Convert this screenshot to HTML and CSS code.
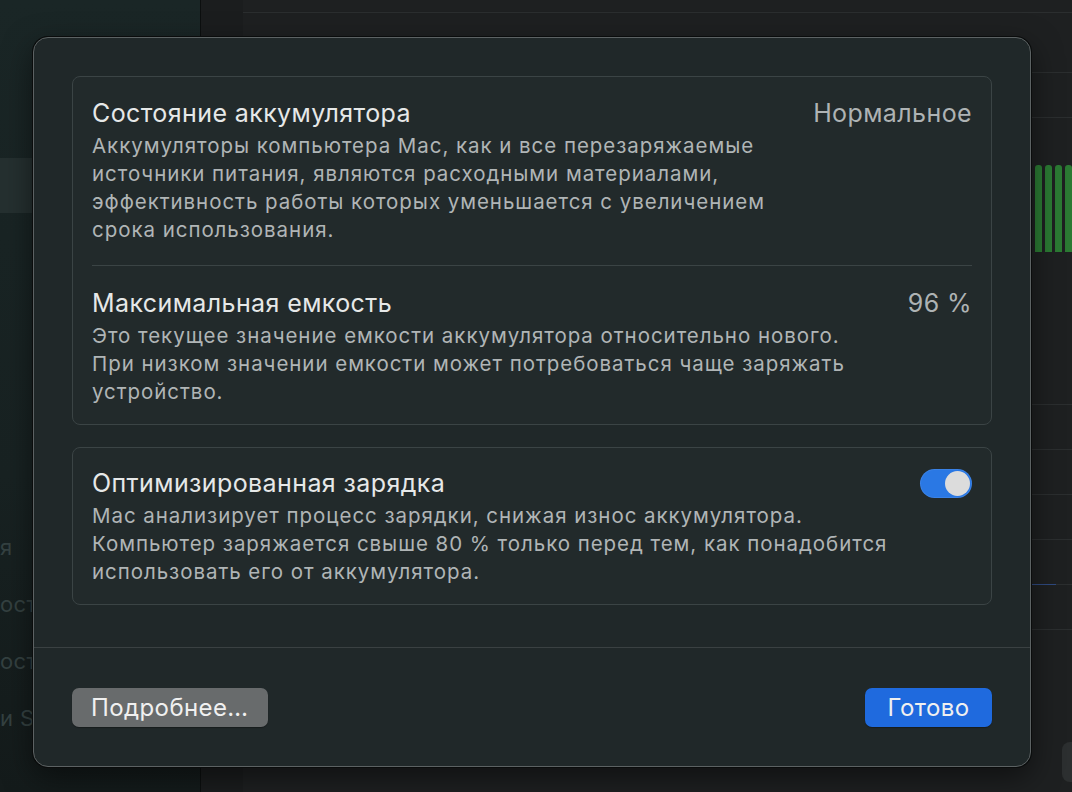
FILE: index.html
```html
<!DOCTYPE html>
<html lang="ru">
<head>
    <meta charset="UTF-8">
    <title>Состояние аккумулятора</title>
    <link rel="stylesheet" href="styles.css">
</head>
<body>
    <div class="window">
        <div class="sidebar">
            <div class="side-item selected"></div>
            <div class="side-list">
                <div class="side-item">я</div>
                <div class="side-item">ост</div>
                <div class="side-item">ост</div>
                <div class="side-item">и Siri</div>
            </div>
        </div>
        <div class="content">
            <div class="rows top">
                <div class="row"></div>
                <div class="row"></div>
                <div class="row"></div>
            </div>
            <div class="chart">
                <span class="bar"></span><span class="bar"></span><span class="bar"></span><span class="bar"></span>
            </div>
            <div class="rows bottom">
                <div class="row"></div>
                <div class="row"></div>
                <div class="row"></div>
                <div class="row"></div>
                <div class="row accent"></div>
                <div class="row"></div>
            </div>
            <div class="corner-btn"></div>
        </div>
    </div>

    <div class="dialog">
        <div class="dialog-body">
            <div class="card">
                <div class="section">
                    <div class="section-head">
                        <div class="section-title">Состояние аккумулятора</div>
                        <div class="section-value">Нормальное</div>
                    </div>
                    <p class="section-text">Аккумуляторы компьютера Mac, как и все перезаряжаемые<br>источники питания, являются расходными материалами,<br>эффективность работы которых уменьшается с увеличением<br>срока использования.</p>
                </div>
                <div class="divider"></div>
                <div class="section">
                    <div class="section-head">
                        <div class="section-title">Максимальная емкость</div>
                        <div class="section-value">96 %</div>
                    </div>
                    <p class="section-text">Это текущее значение емкости аккумулятора относительно нового.<br>При низком значении емкости может потребоваться чаще заряжать<br>устройство.</p>
                </div>
            </div>

            <div class="card">
                <div class="section">
                    <div class="section-head">
                        <div class="section-title">Оптимизированная зарядка</div>
                        <div class="toggle on"><span class="knob"></span></div>
                    </div>
                    <p class="section-text">Mac анализирует процесс зарядки, снижая износ аккумулятора.<br>Компьютер заряжается свыше 80 % только перед тем, как понадобится<br>использовать его от аккумулятора.</p>
                </div>
            </div>
        </div>
        <div class="dialog-footer">
            <button class="btn">Подробнее…</button>
            <button class="btn primary">Готово</button>
        </div>
    </div>
</body>
</html>
```

FILE: styles.css
```css
* {
    box-sizing: border-box;
}
html, body {
    margin: 0;
    padding: 0;
    height: 100%;
}
body {
    font-family: Inter, "Noto Sans", sans-serif;
    background-color: #1d1f20;
    overflow: hidden;
}

/* background window */
.window {
    display: flex;
    height: 792px;
}
.sidebar {
    width: 201px;
    background: linear-gradient(180deg, #1a2626 0%, #182222 60%, #141b1b 100%);
    border-right: 1px solid #0c0f0f;
    padding-top: 158px;
}
.side-item.selected {
    height: 55px;
    background-color: #253030;
}
.side-list {
    padding-top: 306px;
}
.side-list .side-item {
    height: 57px;
    line-height: 57px;
    color: #344141;
    font-size: 22px;
    letter-spacing: 0.4px;
    white-space: nowrap;
}
.content {
    flex: 1;
    position: relative;
    background-color: #1e2021;
    border-left: 42px solid #1b1d1e;
}
.rows .row {
    height: 45px;
    border-bottom: 1px solid #2b2e2f;
}
.rows.top .row:first-child {
    height: 13px;
}
.rows.top .row:nth-child(2) {
    height: 60px;
}
.chart {
    display: flex;
    justify-content: flex-end;
    gap: 3px;
    padding-top: 47px;
    height: 242px;
}
.bar {
    width: 7px;
    height: 87px;
    background-color: #2b7a33;
    border-radius: 3px 3px 0 0;
}
.rows.bottom .row.accent {
    border-bottom: 1px solid;
    border-image: linear-gradient(90deg, #2f4a80 0%, #2f4a80 98%, #2b2e2f 98%) 1;
}
.corner-btn {
    position: absolute;
    right: -10px;
    top: 742px;
    width: 20px;
    height: 40px;
    border-radius: 8px;
    background-color: #2c2f30;
}

/* dialog sheet */
.dialog {
    position: absolute;
    left: 33px;
    top: 37px;
    width: 998px;
    height: 730px;
    background-color: #202829;
    border: 1px solid #5c6263;
    border-radius: 15px;
    box-shadow: 0 0 0 1px #0a0c0c, 0 10px 30px rgba(0, 0, 0, 0.5);
    display: flex;
    flex-direction: column;
}
.dialog-body {
    padding: 38px 38px 0;
    display: flex;
    flex-direction: column;
    gap: 22px;
    height: 610px;
    border-bottom: 1px solid #3a4142;
}
.card {
    background-color: #222a2b;
    border: 1px solid #3b4445;
    border-radius: 8px;
    padding: 0 19px;
}
.section {
    padding: 22px 0 18px;
}
.section-head {
    display: flex;
    justify-content: space-between;
    align-items: center;
    height: 28px;
    margin-bottom: 5px;
}
.section-title {
    font-size: 25px;
    letter-spacing: 0.4px;
    color: #e6e8e8;
}
.section-value {
    font-size: 25px;
    letter-spacing: 0.4px;
    color: #aeb3b4;
}
.section-text {
    margin: 0;
    font-size: 20.5px;
    letter-spacing: 0.95px;
    line-height: 28px;
    color: #b0b5b6;
    white-space: nowrap;
}
.divider {
    height: 1px;
    background-color: #3b4445;
    margin-top: 3px;
}
.divider + .section {
    padding-top: 23px;
}
.card + .card .section {
    padding-top: 21px;
}

.toggle {
    width: 52px;
    height: 29px;
    border-radius: 15px;
    background-color: #2a78e4;
    padding: 2px;
    display: flex;
    justify-content: flex-end;
    box-shadow: inset 0 0 0 1px rgba(255, 255, 255, 0.08);
}
.knob {
    width: 25px;
    height: 25px;
    border-radius: 50%;
    background-color: #dcdcdc;
}

.dialog-footer {
    flex: 1;
    display: flex;
    justify-content: space-between;
    align-items: flex-start;
    padding: 40px 38px 0;
}
.btn {
    font-family: Inter, "Noto Sans", sans-serif;
    font-size: 24px;
    letter-spacing: 0.4px;
    height: 39px;
    border: none;
    border-radius: 7px;
    padding: 0 19px;
    color: #f0f0f0;
    background-color: #686b6c;
    box-shadow: 0 1px 1px rgba(0, 0, 0, 0.3);
}
.btn.primary {
    background-color: #1f6ade;
    padding: 0 18px;
    min-width: 127px;
}
```
